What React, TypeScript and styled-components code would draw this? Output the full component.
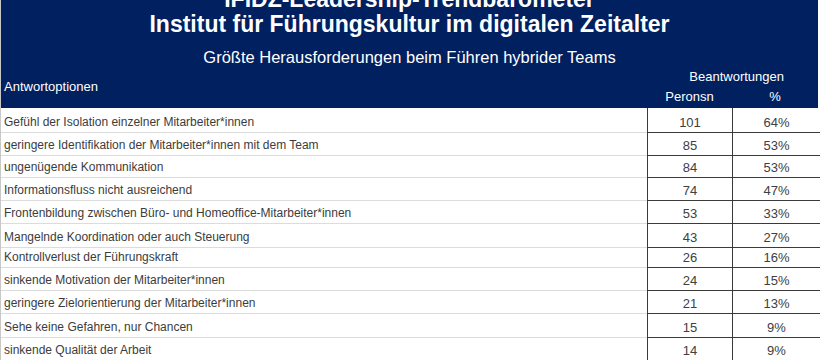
import React from "react";
import styled, { createGlobalStyle } from "styled-components";

const GlobalStyle = createGlobalStyle`
  html, body { margin: 0; padding: 0; background: #ffffff; }
  body { font-family: "Liberation Sans", Arial, sans-serif; overflow: hidden; }
`;

const Page = styled.div`
  width: 820px;
  height: 360px;
  overflow: hidden;
  box-sizing: border-box;
  border-left: 1px solid #c8c8c8;
`;

const Header = styled.header`
  background: #002060;
  color: #ffffff;
  height: 108px;
  margin-right: 2px;
  overflow: hidden;
  display: flex;
  flex-direction: column;
`;

const TitleLine = styled.h1<{ $first?: boolean }>`
  margin: ${(p) => (p.$first ? "-13px" : "0")} 0 0 0;
  font-size: 23px;
  line-height: 25px;
  font-weight: bold;
  text-align: center;
  white-space: nowrap;
`;

const Subtitle = styled.h2`
  margin: 10px 0 0 0;
  font-size: 16.5px;
  line-height: 20px;
  font-weight: normal;
  text-align: center;
`;

const HeadGrid = styled.div`
  display: grid;
  grid-template-columns: 646px 85px 1fr;
  grid-template-rows: 20px 20px;
  font-size: 13px;
  line-height: 20px;
`;

const OptionsLabel = styled.div`
  grid-row: 1 / span 2;
  grid-column: 1;
  display: flex;
  align-items: center;
  padding-left: 3px;
`;

const GroupLabel = styled.div`
  grid-row: 1;
  grid-column: 2 / span 2;
  text-align: right;
  padding-right: 34px;
`;

const ColLabel = styled.div<{ $col: number }>`
  grid-row: 2;
  grid-column: ${(p) => p.$col};
  text-align: center;
`;

const Body = styled.div`
  display: flex;
  flex-direction: column;
`;

const Row = styled.div<{ $h: number }>`
  display: grid;
  grid-template-columns: 646px 85px 1fr;
  height: ${(p) => p.$h}px;
  flex: none;
  line-height: 15px;
`;

const LabelCell = styled.div`
  display: flex;
  align-items: flex-end;
  padding: 0 0 2px 3px;
  font-size: 12px;
  color: #3c3c3c;
  border-bottom: 1px solid #dcdcdc;
  white-space: nowrap;
`;

const NumCell = styled.div`
  display: flex;
  align-items: flex-end;
  justify-content: center;
  padding-bottom: 2px;
  font-size: 13px;
  color: #404040;
  border-left: 1px solid #3a3a3a;
  border-bottom: 1px solid #3a3a3a;
`;

const rows: [string, number, string, number][] = [
  ["Gefühl der Isolation einzelner Mitarbeiter*innen", 101, "64%", 25],
  ["geringere Identifikation der Mitarbeiter*innen mit dem Team", 85, "53%", 23],
  ["ungenügende Kommunikation", 84, "53%", 22],
  ["Informationsfluss nicht ausreichend", 74, "47%", 23],
  ["Frontenbildung zwischen Büro- und Homeoffice-Mitarbeiter*innen", 53, "33%", 23],
  ["Mangelnde Koordination oder auch Steuerung", 43, "27%", 24],
  ["Kontrollverlust der Führungskraft", 26, "16%", 20],
  ["sinkende Motivation der Mitarbeiter*innen", 24, "15%", 23],
  ["geringere Zielorientierung der Mitarbeiter*innen", 21, "13%", 23],
  ["Sehe keine Gefahren, nur Chancen", 15, "9%", 24],
  ["sinkende Qualität der Arbeit", 14, "9%", 23],
];

export default function App() {
  return (
    <>
      <GlobalStyle />
      <Page>
        <Header>
          <TitleLine $first>IFIDZ-Leadership-Trendbarometer</TitleLine>
          <TitleLine>Institut für Führungskultur im digitalen Zeitalter</TitleLine>
          <Subtitle>Größte Herausforderungen beim Führen hybrider Teams</Subtitle>
          <HeadGrid>
            <OptionsLabel>Antwortoptionen</OptionsLabel>
            <GroupLabel>Beantwortungen</GroupLabel>
            <ColLabel $col={2}>Peronsn</ColLabel>
            <ColLabel $col={3}>%</ColLabel>
          </HeadGrid>
        </Header>
        <Body>
          {rows.map(([label, n, pct, h]) => (
            <Row key={label} $h={h}>
              <LabelCell>{label}</LabelCell>
              <NumCell>{n}</NumCell>
              <NumCell>{pct}</NumCell>
            </Row>
          ))}
        </Body>
      </Page>
    </>
  );
}
